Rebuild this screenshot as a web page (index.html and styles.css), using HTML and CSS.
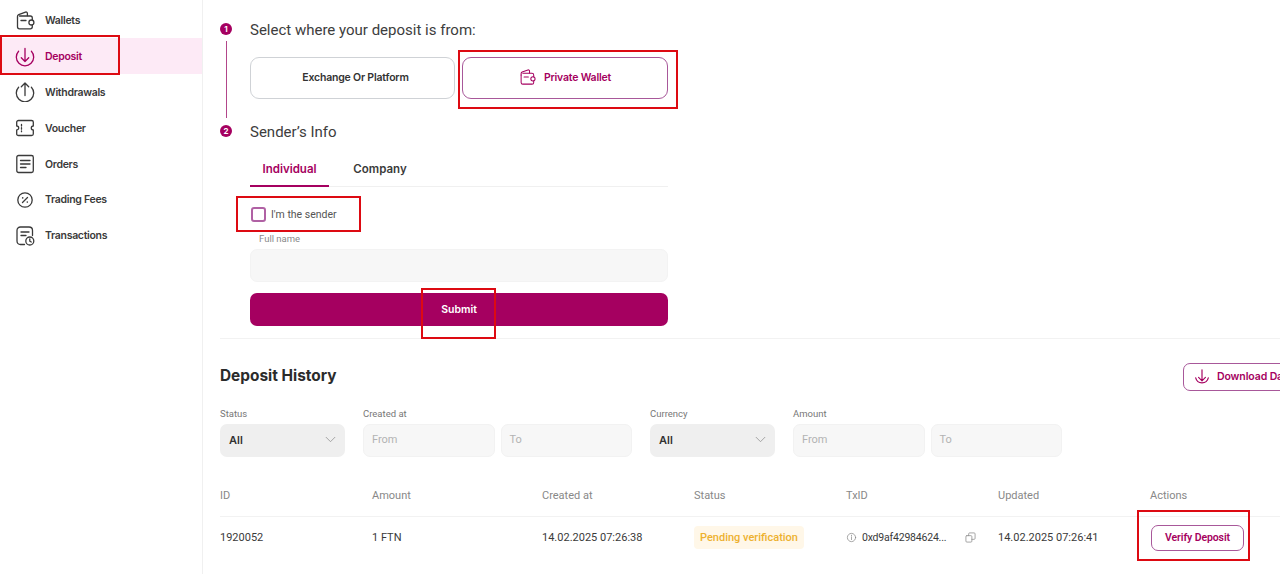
FILE: index.html
```html
<html>
  <head>
    <link rel="stylesheet" href="styles.css">
  </head>
  <body>
    <!-- sidebar -->
    <nav class="sidebar">
      <a class="nav-item">
        <svg class="nav-icon" viewBox="0 0 20 20"><path d="M2.5 7V5.200c0-.8.5-1.300 1.200-1.600l6.800-2.500c1-.3 1.900.3 1.900 1.300v2.300"/><path d="M4.500 5h10.800c1.200 0 2 .8 2 2v2M17.300 14v1.800c0 1.200-.8 2-2 2H4.500c-1.200 0-2-.8-2-2V7"/><circle cx="16.400" cy="11.500" r="2.500"/><path d="M6 9.500h5"/></svg>
        <span>Wallets</span>
      </a>
      <a class="nav-item active">
        <svg class="nav-icon" viewBox="0 0 20 20"><path d="M3.600 4.200a8.700 8.700 0 1 0 12.800 0"/><path d="M10 1.500v13M6.300 10.800l3.700 3.700 3.700-3.700"/></svg>
        <span>Deposit</span>
      </a>
      <a class="nav-item">
        <svg class="nav-icon" viewBox="0 0 20 20"><path d="M3.600 5.200a8.700 8.700 0 1 0 12.800 0"/><path d="M10 13.500V1M6.300 4.700L10 1l3.700 3.700"/></svg>
        <span>Withdrawals</span>
      </a>
      <a class="nav-item">
        <svg class="nav-icon" viewBox="0 0 20 20"><path d="M3.500 2.500h13c1 0 1.800.6 1.800 1.500v4a2 2 0 0 0 0 4v4c0 .9-.8 1.500-1.800 1.500h-13c-1 0-1.800-.6-1.800-1.500v-4a2 2 0 0 0 0-4V4c0-.9.8-1.500 1.800-1.500z"/><path d="M6.500 6.500v1.500M6.500 9.700v1.500M6.500 12.900v.8"/></svg>
        <span>Voucher</span>
      </a>
      <a class="nav-item">
        <svg class="nav-icon" viewBox="0 0 20 20"><rect x="1.800" y="1.500" width="16.500" height="17" rx="1.800"/><path d="M5.500 6.500h9.500M5.500 10h9.500M5.500 13.500h5.500"/></svg>
        <span>Orders</span>
      </a>
      <a class="nav-item">
        <svg class="nav-icon" viewBox="0 0 20 20"><circle cx="10" cy="10" r="7.200"/><path d="M7.500 12.500l5-5"/><circle class="dot" cx="7.700" cy="7.900" r=".8"/><circle class="dot" cx="12.300" cy="12.100" r=".8"/></svg>
        <span>Trading Fees</span>
      </a>
      <a class="nav-item">
        <svg class="nav-icon" viewBox="0 0 20 20"><path d="M9.500 18.500H5.500c-2 0-3.500-1.400-3.500-3.500V4.500C2 2.500 3.500 1 5.500 1h8.500c2 0 3.500 1.500 3.500 3.500v5"/><path d="M6 6h8M6 9.500h5"/><circle cx="14.800" cy="15" r="4"/><path d="M14.800 13v2.200l1.500.8"/></svg>
        <span>Transactions</span>
      </a>
    </nav>

    <main class="main">
      <section class="deposit-form">
        <!-- step 1 -->
        <div class="step">
          <div class="step-marker">
            <span class="step-num">1</span>
            <span class="step-line"></span>
          </div>
          <div class="step-body">
            <h2 class="step-title">Select where your deposit is from:</h2>
            <div class="source-row">
              <button class="source-btn plain">Exchange Or Platform</button>
              <button class="source-btn selected">
                <svg class="source-icon" viewBox="0 0 20 20"><path d="M2.500 7V5.200c0-.8.5-1.300 1.200-1.600l6.800-2.500c1-.3 1.900.3 1.900 1.300v2.300"/><path d="M4.500 5h10.800c1.200 0 2 .8 2 2v2M17.300 14v1.800c0 1.200-.8 2-2 2H4.500c-1.200 0-2-.8-2-2V7"/><circle cx="16.400" cy="11.500" r="2.500"/><path d="M6 9.500h5"/></svg>
                Private Wallet
              </button>
            </div>
          </div>
        </div>
        <!-- step 2 -->
        <div class="step">
          <div class="step-marker">
            <span class="step-num">2</span>
          </div>
          <div class="step-body">
            <h2 class="step-title">Sender’s Info</h2>
            <div class="tabs">
              <span class="tab active">Individual</span>
              <span class="tab">Company</span>
            </div>
            <label class="sender-check">
              <span class="checkbox"></span>
              I'm the sender
            </label>
            <div class="field-label">Full name</div>
            <div class="text-input"></div>
            <button class="submit-btn">Submit</button>
          </div>
        </div>
      </section>

      <section class="history">
        <div class="history-head">
          <h2 class="history-title">Deposit History</h2>
          <button class="download-btn">
            <svg class="download-icon" viewBox="0 0 20 20"><path d="M3 11a7.200 7.200 0 0 0 14 0"/><path d="M10 2v12M6.200 10.500L10 14.300l3.800-3.800"/></svg>
            Download Data
          </button>
        </div>

        <div class="filters">
          <div class="filter">
            <div class="filter-label">Status</div>
            <div class="select">All
              <svg class="chevron" viewBox="0 0 12 8"><path d="M1 1.500l5 5 5-5"/></svg>
            </div>
          </div>
          <div class="filter">
            <div class="filter-label">Created at</div>
            <div class="range">
              <div class="range-input">From</div>
              <div class="range-input">To</div>
            </div>
          </div>
          <div class="filter">
            <div class="filter-label">Currency</div>
            <div class="select">All
              <svg class="chevron" viewBox="0 0 12 8"><path d="M1 1.500l5 5 5-5"/></svg>
            </div>
          </div>
          <div class="filter">
            <div class="filter-label">Amount</div>
            <div class="range">
              <div class="range-input">From</div>
              <div class="range-input">To</div>
            </div>
          </div>
        </div>

        <div class="table-row table-head">
          <span>ID</span>
          <span>Amount</span>
          <span>Created at</span>
          <span>Status</span>
          <span>TxID</span>
          <span>Updated</span>
          <span>Actions</span>
        </div>
        <div class="table-row table-data">
          <span>1920052</span>
          <span>1 FTN</span>
          <span>14.02.2025 07:26:38</span>
          <span><span class="badge">Pending verification</span></span>
          <span class="txid">
            <svg class="info-icon" viewBox="0 0 12 12"><circle cx="6" cy="6" r="4.500"/><path d="M6 5.500v2.800M6 3.500v.8"/></svg>
            <span class="hash">0xd9af42984624...</span>
            <svg class="copy-icon" viewBox="0 0 12 12"><rect x="1" y="4" width="6.500" height="7" rx="1"/><path d="M4 4V2c0-.6.4-1 1-1h5c.6 0 1 .4 1 1v5c0 .6-.4 1-1 1H7.500"/></svg>
          </span>
          <span>14.02.2025 07:26:41</span>
          <span><button class="verify-btn">Verify Deposit</button></span>
        </div>
      </section>
    </main>

    <!-- 赤枠の注釈 -->
    <div class="mark mark-deposit"></div>
    <div class="mark mark-wallet"></div>
    <div class="mark mark-check"></div>
    <div class="mark mark-submit"></div>
    <div class="mark mark-verify"></div>
  </body>
</html>
```

FILE: styles.css
```css
* {
  margin: 0;
  padding: 0;
  box-sizing: border-box;
}
body {
  display: flex;
  height: 574px;
  overflow: hidden;
  background-color: #fff;
  color: #2b2b2b;
  font-family: Inter, "Liberation Sans", sans-serif;
}
button {
  font-family: inherit;
  background: none;
  cursor: pointer;
}
svg {
  fill: none;
  stroke: currentColor;
  stroke-linecap: round;
  stroke-linejoin: round;
}

/* sidebar */
.sidebar {
  flex: 0 0 203px;
  padding-top: 2px;
  border-right: 1px solid #f0f0f0;
}
.nav-item {
  display: flex;
  align-items: center;
  gap: 10px;
  height: 35.8px;
  padding-top: 2px;
  padding-left: 15px;
  font-size: 10.5px;
  font-weight: 600;
  letter-spacing: -.3px;
  color: #3a3a3a;
}
.nav-item.active {
  background-color: #fdeaf6;
  color: #a50060;
}
.nav-icon {
  width: 20px;
  height: 20px;
  stroke-width: 1.3;
}
.dot {
  fill: currentColor;
  stroke: none;
}

/* form */
.main {
  flex: 1;
  min-width: 0;
  padding-left: 17px;
}
.deposit-form {
  padding-top: 21px;
  height: 339px;
  margin-right: -17px;
  border-bottom: 1px solid #f2f2f2;
}
.step {
  display: flex;
}
.step-marker {
  display: flex;
  flex-direction: column;
  align-items: center;
  flex: 0 0 12px;
  margin-right: 18px;
}
.step-num {
  display: flex;
  align-items: center;
  justify-content: center;
  width: 12px;
  height: 12px;
  margin-top: 2px;
  flex-shrink: 0;
  border-radius: 50%;
  background-color: #a50060;
  color: #fff;
  font-size: 8px;
  font-weight: 700;
}
.step-line {
  width: 1px;
  height: 77px;
  margin-top: 6px;
  background-color: #b2468a;
}
.step-body {
  width: 418px;
}
.step-title {
  height: 18px;
  font-family: Roboto, sans-serif;
  font-size: 15px;
  line-height: 18px;
  font-weight: 400;
  color: #3d3d3d;
}
.source-row {
  display: flex;
  gap: 7px;
  margin-top: 18px;
  margin-bottom: 24px;
}
.source-btn {
  display: flex;
  align-items: center;
  justify-content: center;
  gap: 8px;
  flex: 1;
  height: 42px;
  padding-bottom: 1px;
  border: 1px solid #cfd2d6;
  border-radius: 9px;
  font-size: 10.5px;
  font-weight: 600;
  letter-spacing: -.2px;
  color: #333;
}
.source-btn.plain {
  flex: 0 0 205px;
  padding-left: 6px;
}
.source-btn.selected {
  border-color: #a8589a;
  color: #a50060;
}
.source-icon {
  width: 17px;
  height: 17px;
  stroke-width: 1.2;
}
.tabs {
  display: flex;
  height: 36px;
  margin-top: 10px;
  border-bottom: 1px solid #f0f0f0;
  font-size: 11.5px;
  font-weight: 600;
  color: #3a3a3a;
}
.tab {
  display: flex;
  align-items: center;
  justify-content: center;
  width: 79px;
  height: 36px;
  margin-right: 23px;
}
.tab + .tab {
  width: 56px;
}
.tab.active {
  padding-top: 2px;
  color: #a50060;
  border-bottom: 2px solid #a50060;
}
.sender-check {
  display: flex;
  align-items: center;
  gap: 5px;
  height: 16px;
  margin-top: 19px;
  padding-left: 1px;
  font-family: Roboto, sans-serif;
  font-size: 10.5px;
  color: #555;
}
.checkbox {
  width: 15px;
  height: 15px;
  border: 2px solid #b061a4;
  border-radius: 3px;
}
.field-label {
  height: 12px;
  margin-top: 11px;
  padding-left: 9px;
  font-family: Roboto, sans-serif;
  font-size: 9.5px;
  line-height: 12px;
  color: #8a8a8a;
}
.text-input {
  height: 33px;
  margin-top: 4px;
  border: 1px solid #f3f3f3;
  border-radius: 7px;
  background-color: #f7f7f7;
}
.submit-btn {
  display: block;
  width: 100%;
  height: 33px;
  margin-top: 11px;
  padding-bottom: 1px;
  border: 0;
  border-radius: 7px;
  background-color: #a50060;
  color: #fff;
  font-size: 10.5px;
  font-weight: 600;
}

/* history */
.history-head {
  display: flex;
  align-items: center;
  justify-content: space-between;
  margin-top: 24px;
  margin-right: -40px;
}
.history-title {
  padding-bottom: 3px;
  font-size: 15.4px;
  font-weight: 700;
  color: #2b2b2b;
}
.download-btn {
  display: flex;
  align-items: center;
  gap: 6px;
  width: 137px;
  height: 28px;
  padding-left: 9px;
  padding-bottom: 1px;
  flex-shrink: 0;
  white-space: nowrap;
  border: 1px solid #a8589a;
  border-radius: 7px;
  color: #a50060;
  font-size: 10.5px;
  font-weight: 600;
  letter-spacing: -.1px;
}
.download-icon {
  width: 18px;
  height: 18px;
  stroke-width: 1.3;
}
.filters {
  display: flex;
  gap: 18px;
  margin-top: 17px;
}
.filter-label {
  height: 12px;
  margin-bottom: 4px;
  font-family: Roboto, sans-serif;
  font-size: 9.5px;
  line-height: 12px;
  color: #777;
}
.select {
  display: flex;
  align-items: center;
  justify-content: space-between;
  width: 125px;
  height: 33px;
  padding: 0 9px 2px;
  border-radius: 7px;
  background-color: #efefef;
  font-size: 11px;
  font-weight: 600;
  color: #333;
}
.chevron {
  width: 11px;
  height: 7px;
  color: #999;
  stroke-width: 1;
}
.range {
  display: flex;
  gap: 6px;
}
.range-input {
  display: flex;
  align-items: center;
  width: 131.5px;
  height: 33px;
  padding-left: 8px;
  padding-bottom: 2px;
  border: 1px solid #f2f2f2;
  border-radius: 7px;
  background-color: #f7f7f7;
  font-family: Roboto, sans-serif;
  font-size: 11px;
  color: #b3b3b3;
}
.table-row {
  display: grid;
  grid-template-columns: 152px 170px repeat(5, 152px);
  align-items: center;
  margin-right: -17px;
}
.table-head {
  height: 38px;
  margin-top: 22px;
  padding-bottom: 4px;
  border-bottom: 1px solid #f2f2f2;
  font-family: Roboto, sans-serif;
  font-size: 11px;
  color: #888;
}
.table-data {
  height: 41px;
  font-family: Roboto, sans-serif;
  font-size: 11px;
  color: #3a3a3a;
}
.badge {
  display: inline-block;
  height: 23px;
  padding: 5px 6px;
  border-radius: 4px;
  background-color: #fff7e8;
  color: #edb12f;
  font-size: 11px;
  font-weight: 500;
}
.txid {
  display: flex;
  align-items: center;
  gap: 5px;
}
.hash {
  font-size: 10.5px;
  letter-spacing: -.2px;
}
.info-icon {
  width: 11px;
  height: 11px;
  color: #888;
  stroke-width: .8;
}
.copy-icon {
  width: 11px;
  height: 11px;
  margin-left: 14px;
  color: #888;
  stroke-width: .8;
}
.verify-btn {
  width: 93px;
  height: 26px;
  margin-left: 1px;
  border: 1px solid #a8589a;
  border-radius: 7px;
  color: #a50060;
  font-size: 10.5px;
  font-weight: 600;
  letter-spacing: -.1px;
}

/* 赤枠 */
.mark {
  position: absolute;
  border: 2px solid #dd0a12;
}
.mark-deposit {
  left: 0;
  top: 35px;
  width: 120px;
  height: 40px;
}
.mark-wallet {
  left: 458px;
  top: 50px;
  width: 220px;
  height: 59px;
}
.mark-check {
  left: 236px;
  top: 196px;
  width: 125px;
  height: 36px;
}
.mark-submit {
  left: 421px;
  top: 288px;
  width: 75px;
  height: 51px;
}
.mark-verify {
  left: 1137px;
  top: 510px;
  width: 113px;
  height: 51px;
}
```
